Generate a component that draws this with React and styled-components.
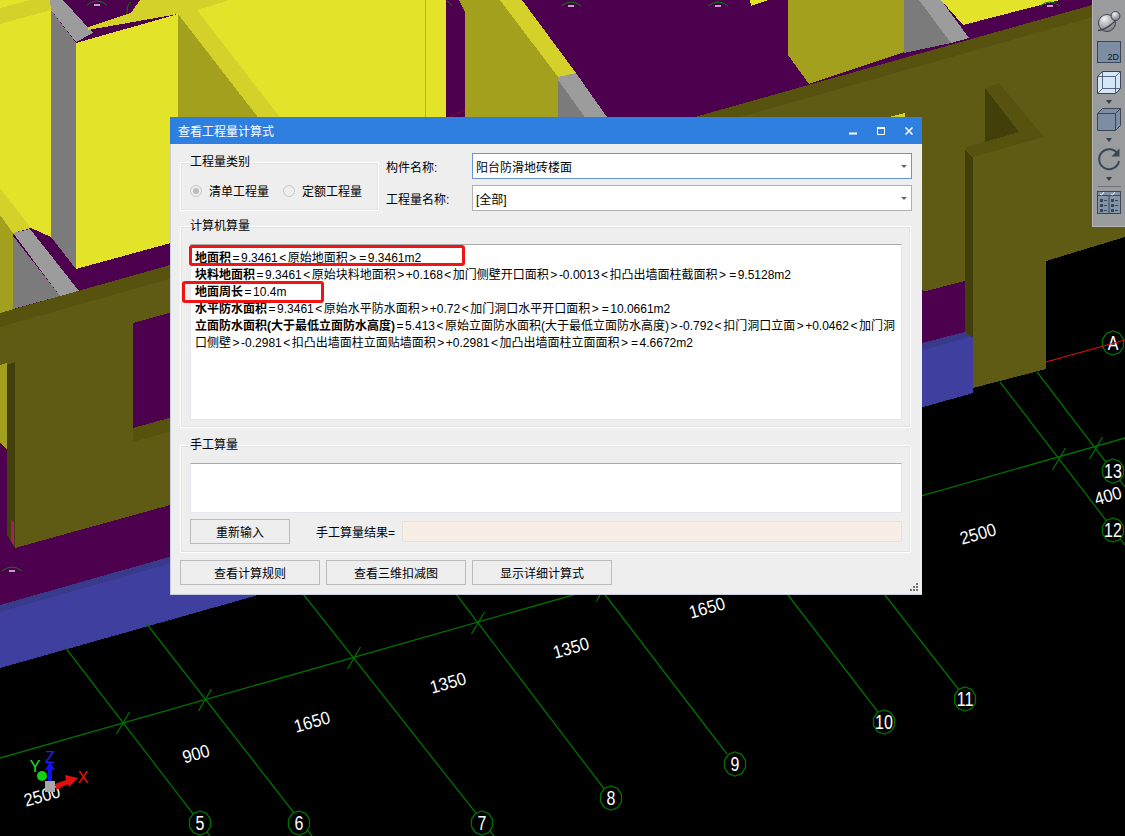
import styled, { createGlobalStyle } from "styled-components";

const GlobalStyle = createGlobalStyle`
    html, body {
        margin: 0;
        padding: 0;
        background: #000;
    }
`;

const UI_FONT = `"Liberation Sans", "Noto Sans CJK SC", sans-serif`;

const Desktop = styled.div`
    position: relative;
    width: 1125px;
    height: 836px;
    overflow: hidden;
    background: #000;
    font-family: ${UI_FONT};
    font-size: 12px;
    color: #000;
`;

const SceneSvg = styled.svg`
    position: absolute;
    inset: 0;
    display: block;
`;

const Toolbar = styled.div`
    position: absolute;
    top: 0;
    left: 1092px;
    width: 33px;
    height: 227px;
    box-sizing: border-box;
    padding-top: 9px;
    display: flex;
    flex-direction: column;
    align-items: center;
    background: #999b9d;
    border-left: 1px solid #b4b5b7;
    border-bottom: 1px solid #b4b5b7;
`;

const ToolIcon = styled.svg`
    display: block;
    flex: none;
    margin-top: ${p => p.$top || 0}px;
`;

const ToolSeparator = styled.div`
    width: 23px;
    height: 1px;
    flex: none;
    background: #6f7275;
    margin-top: 5px;
`;

const Dialog = styled.div`
    position: absolute;
    top: 117px;
    left: 170px;
    width: 752px;
    height: 478px;
    box-sizing: border-box;
    display: flex;
    flex-direction: column;
    background: #eeeeee;
    border: 1px solid #c8cfe0;
    border-top: none;
    border-right: none;
`;

const TitleBar = styled.div`
    height: 27px;
    flex: none;
    margin-left: -1px;
    padding: 0 8px;
    display: flex;
    align-items: center;
    justify-content: space-between;
    background: #2e7fe0;
    color: #fff;
`;

const WindowButtons = styled.div`
    display: flex;
    align-items: center;
    gap: 20px;
    margin-right: 1px;
`;

const Body = styled.div`
    flex: 1;
    padding: 10px 10px 0 9px;
    display: flex;
    flex-direction: column;
`;

const TopRow = styled.div`
    display: flex;
    gap: 7px;
    height: 57px;
    flex: none;
`;

const Group = styled.fieldset`
    box-sizing: border-box;
    margin: ${p => p.$top || 0}px 0 0;
    padding: 0 8px 0 9px;
    min-width: 0;
    flex: none;
    width: ${p => p.$width || 731}px;
    height: ${p => p.$height}px;
    border: 1px solid #fff;
    box-shadow: inset 0 0 0 1px #e2e2e2;
`;

const Legend = styled.legend`
    padding: 0;
    height: 16px;
    line-height: 16px;
`;

const RadioRow = styled.div`
    display: flex;
    align-items: center;
    margin-top: 12px;
`;

const Radio = styled.span`
    width: 12px;
    height: 12px;
    flex: none;
    box-sizing: border-box;
    border: 1px solid #c6c6c6;
    border-radius: 50%;
    background: #efefef;
    display: flex;
    align-items: center;
    justify-content: center;
    margin-left: ${p => p.$gap || 0}px;

    &::after {
        content: "";
        display: ${p => (p.$checked ? "block" : "none")};
        width: 6px;
        height: 6px;
        border-radius: 50%;
        background: #bcbcbc;
    }
`;

const RadioLabel = styled.span`
    margin-left: 7px;
    white-space: nowrap;
`;

const FieldColumn = styled.div`
    flex: none;
    width: 526px;
    margin-top: -1px;
    display: flex;
    flex-direction: column;
    gap: 6px;
`;

const FieldRow = styled.div`
    display: flex;
    align-items: center;
    height: 26px;
`;

const FieldLabel = styled.span`
    width: 86px;
    flex: none;
`;

const Combo = styled.div`
    flex: 1;
    height: 26px;
    box-sizing: border-box;
    padding: 0 4px 0 3px;
    display: flex;
    align-items: center;
    justify-content: space-between;
    background: #fff;
    border: 1px solid ${p => (p.$focused ? "#6a94d8" : "#b0b0b0")};
`;

const ComboArrow = styled.span`
    width: 0;
    height: 0;
    border-left: 3px solid transparent;
    border-right: 3px solid transparent;
    border-top: 3px solid #666;
`;

const ResultPane = styled.div`
    position: relative;
    box-sizing: border-box;
    height: 176px;
    margin-top: 10px;
    padding: 5px 4px 0 4px;
    background: #fff;
    border: 1px solid #e3e6ec;
    border-top-color: #aaa;
`;

const ResultLine = styled.div`
    line-height: 17px;
    height: 17px;
    white-space: nowrap;
`;

const Operator = styled.span`
    padding: 0 1.5px;
`;

const Highlight = styled.div`
    position: absolute;
    top: ${p => p.$top}px;
    left: ${p => p.$left}px;
    width: ${p => p.$width}px;
    height: ${p => p.$height}px;
    box-sizing: border-box;
    border: 3px solid #f01414;
    border-radius: 3px;
`;

const ManualInput = styled.div`
    box-sizing: border-box;
    height: 50px;
    margin-top: 10px;
    background: #fff;
    border: 1px solid #e3e6ec;
    border-top-color: #aaa;
`;

const ManualRow = styled.div`
    display: flex;
    align-items: center;
    margin-top: 6px;
`;

const Button = styled.div`
    box-sizing: border-box;
    flex: none;
    width: ${p => p.$width}px;
    height: 25px;
    display: flex;
    align-items: center;
    justify-content: center;
    border: 1px solid #bcbcbc;
    background: #eeeeee;
`;

const ResultLabel = styled.span`
    margin-left: 26px;
    width: 86px;
    flex: none;
    white-space: nowrap;
`;

const ResultValue = styled.div`
    flex: 1;
    height: 21px;
    box-sizing: border-box;
    background: #f8eee6;
    border: 1px solid #e4e2df;
`;

const Footer = styled.div`
    display: flex;
    gap: 6px;
    margin-top: 7px;
`;

const Grip = styled.svg`
    position: absolute;
    right: 3px;
    bottom: 2px;
`;

const Strong = styled.b`
    font-weight: 700;
`;

const poly = (fill, points) => ({ fill, points });

const YELLOW = "#e3e32a";
const LIGHT_YELLOW = "#d4d22a";
const DARK_YELLOW = "#a3a01e";
const GRAY = "#7b7b7b";
const LIGHT_GRAY = "#9c9c9c";
const PURPLE = "#4d004d";
const OLIVE = "#5f5a14";
const OLIVE_DARK = "#57530f";
const OLIVE_DARKEST = "#433f0b";
const BLUE = "#3f3f9f";
const BLUE_DARK = "#3a3a8c";
const GRID = "#007000";

const shapes = [
    poly(PURPLE, "0,0 1125,0 1125,20 965,331 0,605"),
    // blue skirting
    poly(BLUE, "0,612 973,336 973,393 0,668"),
    poly(BLUE_DARK, "0,605 965,331 973,336 0,612"),
    // top left panels
    poly(LIGHT_YELLOW, "0,0 51,0 51,10 0,24"),
    poly(YELLOW, "0,0 30,0 0,8"),
    poly(YELLOW, "0,24 51,10 51,237 31,228 0,188"),
    poly(LIGHT_YELLOW, "0,188 31,228 13,233 0,215"),
    poly(DARK_YELLOW, "0,215 13,233 13,310 0,313"),
    poly(GRAY, "51,10 76,43 76,269 51,237"),
    poly(LIGHT_GRAY, "50,0 63,0 93,33 76,42 51,10"),
    poly(LIGHT_GRAY, "13,233 30,229 79,291 60,296"),
    poly(GRAY, "13,236 60,296 13,309"),
    poly(LIGHT_YELLOW, "131,13 140,0 230,0 197,10 178,14 88,30 88,27"),
    poly(YELLOW, "76,43 178,14 178,241 76,269"),
    poly(DARK_YELLOW, "178,14 178,120 262,120"),
    poly(LIGHT_YELLOW, "178,14 197,10 282,120 260,120"),
    poly(YELLOW, "197,10 230,0 446,0 446,120 282,120"),
    poly("#b5b526", "425,0 426,0 426,120 425,120"),
    // middle wall
    poly(DARK_YELLOW, "459,0 500,0 558,77 558,130 465,130 465,12"),
    poly(LIGHT_YELLOW, "500,0 522,0 576,73 558,77"),
    poly(LIGHT_GRAY, "558,77 576,73 609,120 558,120"),
    poly(GRAY, "558,80 587,120 558,120"),
    poly(YELLOW, "750,0 769,0 751,6"),
    // right wall
    poly(DARK_YELLOW, "788,0 904,0 904,52 809,84 788,55"),
    poly(GRAY, "904,0 919,0 951,43 904,53"),
    poly(LIGHT_GRAY, "919,0 941,0 969,38 951,43"),
    poly(YELLOW, "941,0 1060,0 963,25"),
    // olive front wall
    poly(OLIVE, "0,313 1092,5 1125,0 1125,237 1046,261 1046,369 973,388 973,320 922,290 170,505 15,548 7,535 7,365 0,365"),
    poly(OLIVE_DARK, "0,313 1092,5 1125,0 1125,8 1100,15 0,327"),
    poly(PURPLE, "133,323 180,310 180,415 133,428"),
    poly(OLIVE_DARK, "133,428 180,415 180,429 133,442"),
    // left column stub
    poly(DARK_YELLOW, "0,365 7,363 7,450 0,442"),
    poly(OLIVE_DARKEST, "7,365 15,362 15,548 7,535"),
    poly("#a02060", "11,520 14,522 14,546 11,541"),
    // bay on the right
    poly(PURPLE, "922,292 965,281 965,332 922,343"),
    poly(OLIVE_DARKEST, "965,150 973,157 973,338 965,332"),
    poly(OLIVE_DARK, "965,148 985,141 985,88 999,83 1044,137 973,157"),
    poly(OLIVE_DARKEST, "985,88 1019,132 985,142"),
    poly(LIGHT_YELLOW, "885,118 905,113 905,120 885,120"),
];

const gridLines = [
    [0, 758, 1125, 438],
    [65, 647, 210, 836],
    [146, 623, 312, 836],
    [300, 590, 494, 836],
    [453, 590, 605, 790],
    [603, 592, 727, 754],
    [788, 595, 878, 712],
    [885, 595, 959, 690],
    [1000, 382, 1125, 545],
    [1037, 372, 1125, 487],
];

const ticks = [[123, 723], [205, 700], [354, 658], [478, 623], [603, 590], [1059, 459], [1096, 448]];

const axes = [
    ["5", 200, 823], ["6", 299, 823], ["7", 482, 823], ["8", 611, 798], ["9", 735, 764],
    ["10", 884, 722], ["11", 965, 699], ["12", 1113, 530], ["13", 1113, 471], ["A", 1113, 343],
];

const dimensions = [
    ["2500", 978, 534], ["400", 1108, 496], ["1650", 707, 608], ["1350", 571, 648],
    ["1350", 448, 683], ["1650", 312, 722], ["900", 196, 754], ["2500", 42, 796],
];

const slabMarks = [[12, 568], [97, 2], [571, 3], [718, 3], [1050, 3]];

const results = [
    ["地面积", "=9.3461<原始地面积>=9.3461m2"],
    ["块料地面积", "=9.3461<原始块料地面积>+0.168<加门侧壁开口面积>-0.0013<扣凸出墙面柱截面积>=9.5128m2"],
    ["地面周长", "=10.4m"],
    ["水平防水面积", "=9.3461<原始水平防水面积>+0.72<加门洞口水平开口面积>=10.0661m2"],
    ["立面防水面积(大于最低立面防水高度)", "=5.413<原始立面防水面积(大于最低立面防水高度)>-0.792<扣门洞口立面>+0.0462<加门洞"],
    ["", "口侧壁>-0.2981<扣凸出墙面柱立面贴墙面积>+0.2981<加凸出墙面柱立面面积>=4.6672m2"],
];

// the operators sit wider in the reference font than in Liberation Sans
function formula(text) {
    return text.split(/([<>=])/).map((part, i) => (
        i % 2 ? <Operator key={i}>{part}</Operator> : part
    ));
}

function octagon(cx, cy) {
    const pts = [];
    for (let i = 0; i < 10; i++) {
        const a = (Math.PI * 2 * i) / 10 + Math.PI / 10;
        pts.push(`${(cx + Math.cos(a) * 11).toFixed(1)},${(cy + Math.sin(a) * 12).toFixed(1)}`);
    }
    return pts.join(" ");
}

function CadScene() {
    return (
        <SceneSvg width="1125" height="836" viewBox="0 0 1125 836">
            {shapes.map((s, i) => <polygon key={i} fill={s.fill} points={s.points} shapeRendering="crispEdges" />)}
            {slabMarks.map(([x, y], i) => (
                <g key={i}>
                    <path d={`M${x - 10} ${y + 3} Q${x} ${y - 5} ${x + 10} ${y + 3}`} fill="none" stroke="#0a7a0a" />
                    <rect x={x - 3} y={y + 2} width="6" height="2" fill="#c89ac8" />
                </g>
            ))}
            <path d="M127 13Q127 4 131 2M447 1Q450 2 452 6" fill="none" stroke="#0a7a0a" />
            <line x1="447" y1="118" x2="465" y2="110" stroke="#8a1020" />
            {gridLines.map(([x1, y1, x2, y2], i) => <line key={i} x1={x1} y1={y1} x2={x2} y2={y2} stroke={GRID} strokeWidth="1.300" />)}
            {ticks.map(([x, y], i) => <line key={i} x1={x + 6.5} y1={y - 11} x2={x - 6.5} y2={y + 11} stroke={GRID} strokeWidth="1.300" />)}
            {axes.map(([label, x, y]) => (
                <g key={label}>
                    <polygon points={octagon(x, y)} fill="#000" stroke={GRID} strokeWidth="1.300" />
                    <text
                        x={x}
                        y={y + 7}
                        fill="#fff"
                        fontSize="20"
                        textAnchor="middle"
                        fontFamily="Liberation Sans, sans-serif"
                        transform={`translate(${x} 0) scale(0.8 1) translate(${-x} 0)`}
                    >
                        {label}
                    </text>
                </g>
            ))}
            <line x1="1046" y1="362" x2="1125" y2="340" stroke="#f01010" />
            {dimensions.map(([label, x, y], i) => (
                <text
                    key={i}
                    x={0}
                    y={6}
                    fill="#fff"
                    fontSize="18"
                    textAnchor="middle"
                    fontFamily="Liberation Sans, sans-serif"
                    transform={`translate(${x} ${y}) rotate(-16) scale(0.92 1)`}
                >
                    {label}
                </text>
            ))}
            {/* axis gizmo */}
            <polygon points="55,784 66,780 65,775 78,778 69,787 68,784 56,790" fill="#e01010" />
            <polygon points="48,783 48,770 45,770 50,761 55,770 52,770 52,783" fill="#1010f0" />
            <circle cx="42" cy="776" r="5" fill="#10d010" />
            <rect x="45" y="781" width="10" height="11" fill="#a8a8a8" />
            <text x="35" y="772" fill="#20e020" fontSize="16" textAnchor="middle" fontFamily="Liberation Sans, sans-serif">Y</text>
            <text x="50" y="763" fill="#2020f0" fontSize="16" textAnchor="middle" fontFamily="Liberation Sans, sans-serif">Z</text>
            <text x="83" y="783" fill="#f01010" fontSize="16" textAnchor="middle" fontFamily="Liberation Sans, sans-serif">X</text>
        </SceneSvg>
    );
}

function DropTriangle({ top }) {
    return (
        <ToolIcon $top={top} width="8" height="4" viewBox="0 0 8 4">
            <path d="M1 0h6L4 4z" fill="#33404f" />
        </ToolIcon>
    );
}

function ToolPalette() {
    const edge = "#3a4658";
    return (
        <Toolbar>
            <ToolIcon width="24" height="24" viewBox="0 0 24 24">
                <defs>
                    <radialGradient id="ball" cx="35%" cy="25%" r="85%">
                        <stop offset="0%" stopColor="#f4f4f4" />
                        <stop offset="100%" stopColor="#6d7076" />
                    </radialGradient>
                </defs>
                <circle cx="10" cy="14" r="8.500" fill="url(#ball)" stroke="#3f444c" />
                <path d="M1 21.500C8 21 17 15 21 8" fill="none" stroke="#3f444c" strokeWidth="1.400" />
                <circle cx="18.500" cy="7" r="4.500" fill="url(#ball)" stroke="#3f444c" />
            </ToolIcon>
            <ToolIcon $top={8} width="24" height="22" viewBox="0 0 24 22">
                <rect x="0.5" y="0.5" width="23" height="21" fill="#7d8da3" stroke={edge} />
                <text x="22" y="19" fontSize="9" textAnchor="end" fill="#0c1826" fontFamily="Liberation Sans, sans-serif">2D</text>
            </ToolIcon>
            <ToolIcon $top={8} width="24" height="23" viewBox="0 0 24 23">
                <path d="M.5 5.5 5.5.5h18v17l-5 5H.5z" fill="#d4e7fa" stroke={edge} />
                <path d="M.5 5.5h18v17M18.5 5.5l5-5M5.500 .5v17h18M5.500 17.500l-5 5" fill="none" stroke={edge} strokeWidth=".8" />
            </ToolIcon>
            <DropTriangle top={6} />
            <ToolIcon $top={4} width="24" height="23" viewBox="0 0 24 23">
                <path d="M.5 5.5 5.500 .5h18v17l-5 5H.5z" fill="#7d8da3" stroke={edge} />
                <path d="M.5 5.5h18v17M18.5 5.5l5-5" fill="none" stroke={edge} />
            </ToolIcon>
            <DropTriangle top={7} />
            <ToolIcon $top={5} width="24" height="25" viewBox="0 0 24 25">
                <path d="M21 7.500A10 10 0 1 0 22 14" fill="none" stroke="#3a4658" strokeWidth="2" />
                <path d="M22.500 1.500v8h-8z" fill="#3a4658" />
            </ToolIcon>
            <DropTriangle top={5} />
            <ToolSeparator />
            <ToolIcon $top={4} width="24" height="23" viewBox="0 0 24 23">
                <rect x="0.500" y="0.500" width="23" height="22" fill="#8393a8" stroke={edge} />
                <path d="M.5 4.500h23M12 5v17" stroke={edge} />
                <path d="M3 3l1.500 1L7 1M14 3l1.500 1L18 1" fill="none" stroke="#fff" />
                {[8, 13, 18].map(y => (
                    <g key={y} fill={edge}>
                        <rect x="3" y={y} width="3" height="3" />
                        <rect x="7" y={y + 1} width="3" height="1" />
                        <rect x="14" y={y} width="3" height="3" />
                        <rect x="18" y={y + 1} width="3" height="1" />
                    </g>
                ))}
            </ToolIcon>
        </Toolbar>
    );
}

function WindowControls() {
    return (
        <WindowButtons>
            <svg width="8" height="8" viewBox="0 0 8 8"><rect y="5.500" width="8" height="2" fill="#fff" /></svg>
            <svg width="8" height="8" viewBox="0 0 8 8"><path d="M.5 1.500h7v6h-7z" fill="none" stroke="#fff" /><rect width="8" height="2" fill="#fff" /></svg>
            <svg width="8" height="8" viewBox="0 0 8 8"><path d="M.5.5l7 7M7.500 .5l-7 7" stroke="#fff" strokeWidth="1.500" /></svg>
        </WindowButtons>
    );
}

function App() {
    return (
        <Desktop>
            <GlobalStyle />
            <CadScene />
            <ToolPalette />
            <Dialog>
                <TitleBar>
                    <span>查看工程量计算式</span>
                    <WindowControls />
                </TitleBar>
                <Body>
                    <TopRow>
                        <Group $width={199} $height={57}>
                            <Legend>工程量类别</Legend>
                            <RadioRow>
                                <Radio $checked />
                                <RadioLabel>清单工程量</RadioLabel>
                                <Radio $gap={14} />
                                <RadioLabel>定额工程量</RadioLabel>
                            </RadioRow>
                        </Group>
                        <FieldColumn>
                            <FieldRow>
                                <FieldLabel>构件名称:</FieldLabel>
                                <Combo $focused>
                                    阳台防滑地砖楼面
                                    <ComboArrow />
                                </Combo>
                            </FieldRow>
                            <FieldRow>
                                <FieldLabel>工程量名称:</FieldLabel>
                                <Combo>
                                    [全部]
                                    <ComboArrow />
                                </Combo>
                            </FieldRow>
                        </FieldColumn>
                    </TopRow>
                    <Group $top={7} $height={210}>
                        <Legend>计算机算量</Legend>
                        <ResultPane>
                            {results.map(([name, text], i) => (
                                <ResultLine key={i}>
                                    {name && <Strong>{name}</Strong>}
                                    {formula(text)}
                                </ResultLine>
                            ))}
                            <Highlight $top={0} $left={-2} $width={276} $height={21} />
                            <Highlight $top={36} $left={-9} $width={142} $height={22} />
                        </ResultPane>
                    </Group>
                    <Group $top={9} $height={116}>
                        <Legend>手工算量</Legend>
                        <ManualInput />
                        <ManualRow>
                            <Button $width={100}>重新输入</Button>
                            <ResultLabel>手工算量结果=</ResultLabel>
                            <ResultValue />
                        </ManualRow>
                    </Group>
                    <Footer>
                        <Button $width={140}>查看计算规则</Button>
                        <Button $width={140}>查看三维扣减图</Button>
                        <Button $width={140}>显示详细计算式</Button>
                    </Footer>
                </Body>
                <Grip width="9" height="9" viewBox="0 0 9 9">
                    {[[6, 0], [3, 3], [6, 3], [0, 6], [3, 6], [6, 6]].map(([x, y], i) => (
                        <rect key={i} x={x} y={y} width="2" height="2" fill="#6f7278" />
                    ))}
                </Grip>
            </Dialog>
        </Desktop>
    );
}

export default App;
